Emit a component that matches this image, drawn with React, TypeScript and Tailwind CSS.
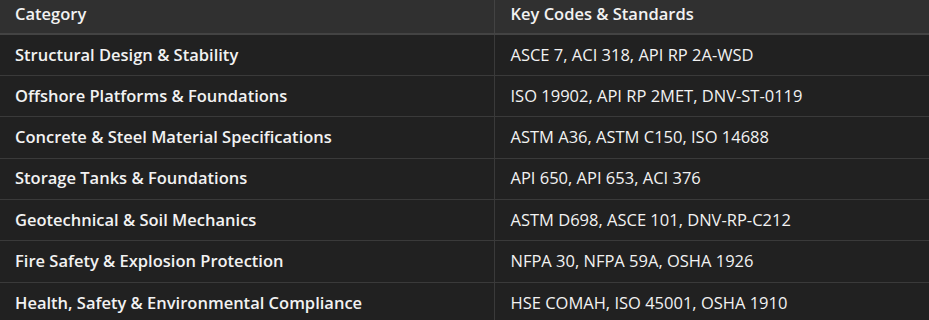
import React from "react";

const rows: [string, string][] = [
  ["Structural Design & Stability", "ASCE 7, ACI 318, API RP 2A-WSD"],
  ["Offshore Platforms & Foundations", "ISO 19902, API RP 2MET, DNV-ST-0119"],
  ["Concrete & Steel Material Specifications", "ASTM A36, ASTM C150, ISO 14688"],
  ["Storage Tanks & Foundations", "API 650, API 653, ACI 376"],
  ["Geotechnical & Soil Mechanics", "ASTM D698, ASCE 101, DNV-RP-C212"],
  ["Fire Safety & Explosion Protection", "NFPA 30, NFPA 59A, OSHA 1926"],
  ["Health, Safety & Environmental Compliance", "HSE COMAH, ISO 45001, OSHA 1910"],
];

export default function App() {
  return (
    <div
      className="w-[929px] h-[320px] overflow-hidden bg-[#212121] text-[#f2f2f2]"
      style={{ fontFamily: '"Open Sans", "Noto Sans", sans-serif' }}
    >
      <table className="w-full border-collapse text-[16.5px]">
        <thead>
          <tr className="bg-[#303030] h-[34px] border-b-2 border-[#434343]">
            <th className="text-left font-semibold pl-[15px] w-[494px] border-r border-[#434343] pb-[4px]">Category</th>
            <th className="text-left font-semibold pl-[16px] pb-[4px]">Key Codes &amp; Standards</th>
          </tr>
        </thead>
        <tbody>
          {rows.map(([a, b]) => (
            <tr key={a} className="h-[41.4px] border-b border-[#3a3a3a]">
              <td className="pl-[15px] font-semibold border-r border-[#3a3a3a]">{a}</td>
              <td className="pl-[16px]">{b}</td>
            </tr>
          ))}
        </tbody>
      </table>
    </div>
  );
}
